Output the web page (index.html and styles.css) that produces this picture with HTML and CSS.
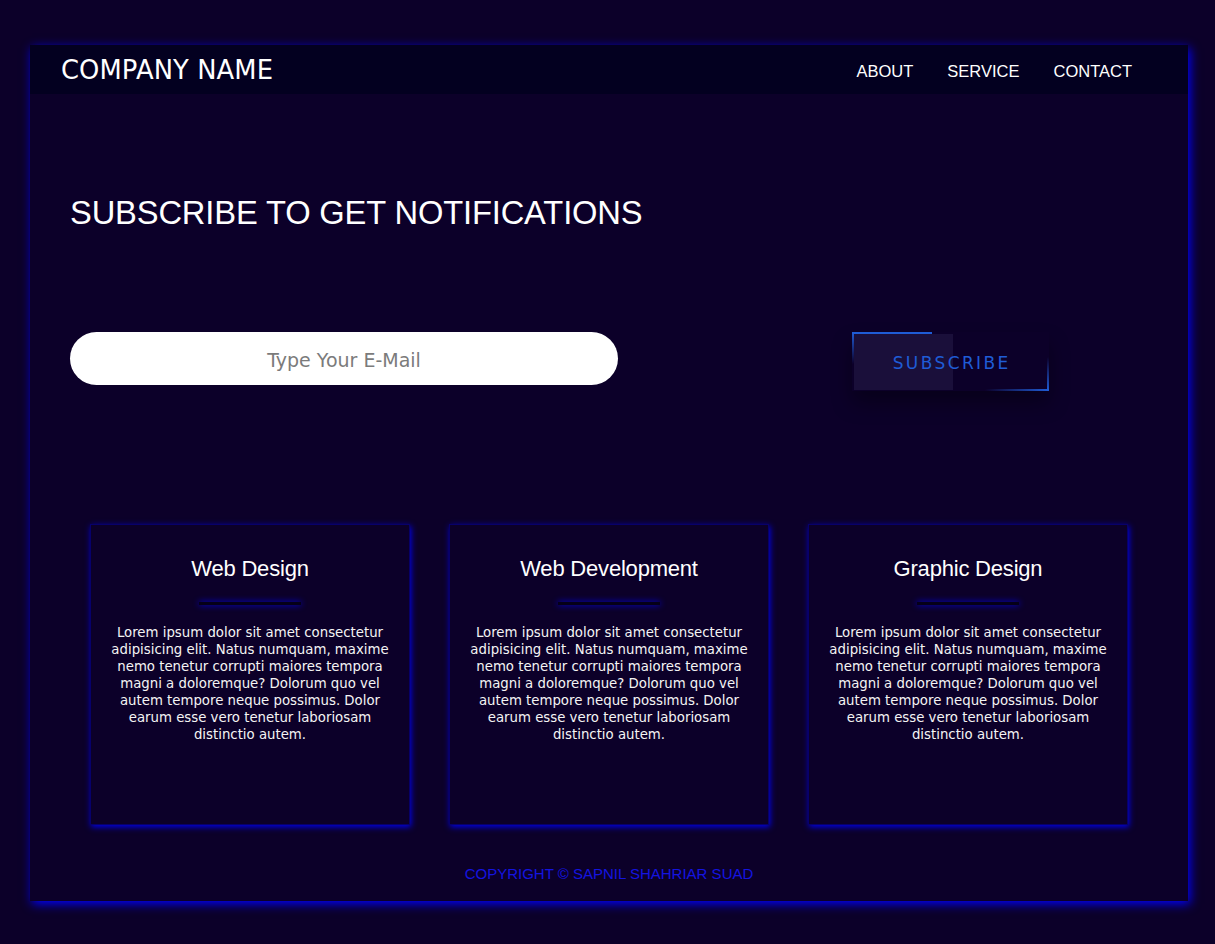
FILE: index.html
```html
<!DOCTYPE html>
<html lang="en">
<head>
<meta charset="utf-8">
<title>Company Name</title>
<link rel="stylesheet" href="styles.css">
</head>
<body>
<div class="page">
  <header class="topbar">
    <div class="brand">COMPANY NAME</div>
    <nav class="nav">
      <a href="#" class="nav-link">ABOUT</a>
      <a href="#" class="nav-link">SERVICE</a>
      <a href="#" class="nav-link">CONTACT</a>
    </nav>
  </header>

  <section class="hero">
    <h1 class="hero-title">SUBSCRIBE TO GET NOTIFICATIONS</h1>
    <form class="sub-form" onsubmit="return false">
      <input class="email" type="email" placeholder="Type Your E-Mail">
      <button class="sub-btn" type="submit">
        <span class="fill"></span>
        <span class="ln ln-top"></span>
        <span class="ln ln-left"></span>
        <span class="ln ln-right"></span>
        <span class="ln ln-bottom"></span>
        <span class="label">SUBSCRIBE</span>
      </button>
    </form>
  </section>

  <section class="services">
    <div class="card">
      <h2 class="card-title">Web Design</h2>
      <div class="card-bar"></div>
      <p class="card-text">Lorem ipsum dolor sit amet consectetur adipisicing elit. Natus numquam, maxime nemo tenetur corrupti maiores tempora magni a doloremque? Dolorum quo vel autem tempore neque possimus. Dolor earum esse vero tenetur laboriosam distinctio autem.</p>
    </div>
    <div class="card">
      <h2 class="card-title">Web Development</h2>
      <div class="card-bar"></div>
      <p class="card-text">Lorem ipsum dolor sit amet consectetur adipisicing elit. Natus numquam, maxime nemo tenetur corrupti maiores tempora magni a doloremque? Dolorum quo vel autem tempore neque possimus. Dolor earum esse vero tenetur laboriosam distinctio autem.</p>
    </div>
    <div class="card">
      <h2 class="card-title">Graphic Design</h2>
      <div class="card-bar"></div>
      <p class="card-text">Lorem ipsum dolor sit amet consectetur adipisicing elit. Natus numquam, maxime nemo tenetur corrupti maiores tempora magni a doloremque? Dolorum quo vel autem tempore neque possimus. Dolor earum esse vero tenetur laboriosam distinctio autem.</p>
    </div>
  </section>

  <footer class="footer">COPYRIGHT © SAPNIL SHAHRIAR SUAD</footer>
</div>
</body>
</html>
```

FILE: styles.css
```css
* { box-sizing: border-box; }

html, body {
  margin: 0;
  background: #0c0029;
}

body {
  padding-top: 45px;
  height: 944px;
  overflow: hidden;
  font-family: "Liberation Sans", Arial, sans-serif;
  color: #ffffff;
}

.page {
  width: 1158px;
  margin-left: 30px;
  background: #0c0029;
  box-shadow: 2px 3px 10px #0000ff;
}

.topbar {
  height: 49px;
  background: #030020;
  display: flex;
  align-items: center;
  justify-content: space-between;
  padding: 0 56px 0 31px;
}

.brand {
  font-family: "DejaVu Sans", sans-serif;
  font-size: 25.8px;
  line-height: 30px;
  color: #ffffff;
  letter-spacing: 0.1px;
}

.nav {
  display: flex;
  gap: 34px;
  padding-top: 3px;
}

.nav-link {
  font-size: 16.5px;
  color: #ffffff;
  text-decoration: none;
}

.hero {
  padding-left: 40px;
}

.hero-title {
  margin: 100px 0 0;
  font-size: 32.7px;
  line-height: 38px;
  font-weight: normal;
  letter-spacing: -0.15px;
  color: #ffffff;
}

.sub-form {
  margin-top: 100px;
  display: flex;
  align-items: flex-start;
}

.email {
  width: 548px;
  height: 53px;
  border: none;
  border-radius: 27px;
  background: #ffffff;
  text-align: center;
  font-family: "DejaVu Sans", sans-serif;
  font-size: 19px;
  color: #333;
  outline: none;
  padding: 2px 20px 0;
}

.email::placeholder {
  color: #7b7b7b;
}

.sub-btn {
  position: relative;
  margin-left: 234px;
  width: 197px;
  height: 59px;
  border: none;
  background: transparent;
  padding: 2px 0 0;
  cursor: pointer;
  box-shadow: 0 12px 20px rgba(0, 0, 0, 0.35);
}

.sub-btn .fill {
  position: absolute;
  left: 2px;
  top: 2px;
  width: 99px;
  height: 56px;
  background: #1a0f3a;
}

.sub-btn .ln {
  position: absolute;
}

.ln-top {
  left: 0;
  top: 0;
  width: 80px;
  height: 2px;
  background: #1f5cd6;
}

.ln-left {
  left: 0;
  top: 0;
  width: 2px;
  height: 32px;
  background: linear-gradient(to bottom, #1f5cd6, rgba(31, 92, 214, 0));
}

.ln-right {
  right: 0;
  bottom: 0;
  width: 2px;
  height: 34px;
  background: linear-gradient(to top, #1f5cd6, rgba(31, 92, 214, 0));
}

.ln-bottom {
  right: 0;
  bottom: 0;
  width: 64px;
  height: 2px;
  background: linear-gradient(to left, #1f5cd6, rgba(31, 92, 214, 0));
}

.sub-btn .label {
  position: relative;
  font-family: "DejaVu Sans", sans-serif;
  font-size: 17px;
  letter-spacing: 2.4px;
  color: #1f5cd6;
  padding-left: 2.4px;
}

.services {
  margin-top: 133px;
  display: flex;
  justify-content: center;
  gap: 39px;
}

.card {
  width: 320px;
  height: 301px;
  padding: 31px 20px 0;
  text-align: center;
  border: 1px solid #07006a;
  box-shadow: 1px 2px 6px #0000ee;
}

.card-title {
  margin: 0;
  font-size: 22px;
  line-height: 26px;
  font-weight: normal;
  letter-spacing: -0.2px;
  color: #ffffff;
}

.card-bar {
  width: 102px;
  height: 3px;
  margin: 20px auto 0;
  background: #050018;
  box-shadow: 0 0 6px #0000ff;
}

.card-text {
  margin: 19px 0 0;
  font-family: "DejaVu Sans", sans-serif;
  font-size: 13.3px;
  line-height: 17px;
  color: #f4f4f4;
}

.footer {
  margin-top: 40px;
  padding-bottom: 18px;
  text-align: center;
  font-size: 15px;
  line-height: 18px;
  color: #1414e0;
}
```
